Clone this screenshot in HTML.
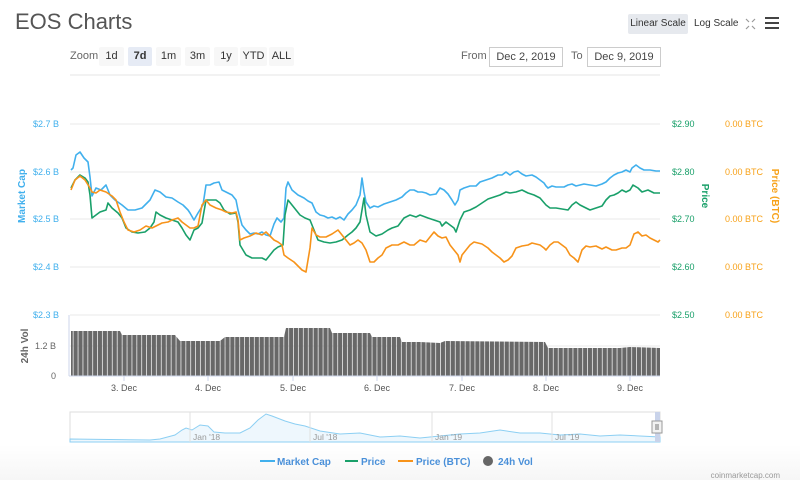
<!DOCTYPE html>
<html><head><meta charset="utf-8"><style>
body{margin:0;width:800px;height:480px;overflow:hidden;background:#fff;font-family:"Liberation Sans",sans-serif;position:relative}
.t{position:absolute;white-space:nowrap}
.btn{position:absolute;top:47px;height:19px;line-height:19px;font-size:11px;color:#333;background:#f7f7f7;text-align:center;border-radius:2px}
.box{position:absolute;top:47px;height:18px;line-height:18px;border:1px solid #ccc;font-size:11px;color:#444;text-align:center}
</style></head><body>
<div style="position:absolute;left:0;top:445px;width:800px;height:35px;background:linear-gradient(#fff,#f6f6f6)"></div>
<div class="t" style="left:15px;top:9px;font-size:22px;color:#555">EOS Charts</div>
<div class="t" style="left:70px;top:50px;font-size:11px;color:#666">Zoom</div>
<div class="btn" style="left:99px;width:25px">1d</div>
<div class="btn" style="left:128px;width:24px;background:#e6ebf5;font-weight:bold">7d</div>
<div class="btn" style="left:156px;width:25px">1m</div>
<div class="btn" style="left:185px;width:25px">3m</div>
<div class="btn" style="left:214px;width:24px">1y</div>
<div class="btn" style="left:240px;width:27px">YTD</div>
<div class="btn" style="left:269px;width:25px">ALL</div>
<div class="t" style="left:461px;top:50px;font-size:11px;color:#666">From</div>
<div class="box" style="left:489px;width:72px">Dec 2, 2019</div>
<div class="t" style="left:571px;top:50px;font-size:11px;color:#666">To</div>
<div class="box" style="left:587px;width:72px">Dec 9, 2019</div>
<div class="t" style="left:628px;top:14px;width:60px;height:20px;line-height:20px;background:#e6e9ee;font-size:10px;color:#333;text-align:center;border-radius:2px">Linear Scale</div>
<div class="t" style="left:694px;top:18px;font-size:10px;color:#333">Log Scale</div>
<svg style="position:absolute;left:0;top:0" width="800" height="480">
<g stroke="#999" stroke-width="1.2" fill="none"><path d="M746 19l3 3M755 19l-3 3M746 29l3-3M755 29l-3-3"/></g>
<g fill="#444"><rect x="765" y="17" width="14" height="2"/><rect x="765" y="22" width="14" height="2"/><rect x="765" y="27" width="14" height="2"/></g>
<line x1="70" y1="75" x2="660" y2="75" stroke="#e6e6e6"/>
<g stroke="#e8e8e8"><line x1="70" y1="124" x2="660" y2="124"/><line x1="70" y1="172" x2="660" y2="172"/><line x1="70" y1="219" x2="660" y2="219"/><line x1="70" y1="267" x2="660" y2="267"/><line x1="70" y1="315" x2="660" y2="315"/><line x1="70" y1="346" x2="660" y2="346"/></g>
<line x1="69" y1="315" x2="69" y2="376" stroke="#ccd6eb"/>
<defs><pattern id="bp" width="4.9" height="10" patternUnits="userSpaceOnUse"><rect x="0" y="0" width="4.2" height="10" fill="#686868"/></pattern></defs>
<polygon fill="url(#bp)" points="71,376 71,331 120,331 122,335 175,335 180,341 220,341 225,337 284,337 286,328 330,328 332,333 370,333 372,337 400,337 402,342 420,342 440,343 445,341 545,342 548,348 620,348 630,347 660,348 660,376"/>
<line x1="69" y1="376" x2="660" y2="376" stroke="#ccd6eb"/>
<g stroke="#ccd6eb"><line x1="124" y1="376" x2="124" y2="381"/><line x1="208" y1="376" x2="208" y2="381"/><line x1="293" y1="376" x2="293" y2="381"/><line x1="377" y1="376" x2="377" y2="381"/><line x1="462" y1="376" x2="462" y2="381"/><line x1="546" y1="376" x2="546" y2="381"/><line x1="630" y1="376" x2="630" y2="381"/></g>
<g fill="none" stroke-width="1.6" stroke-linejoin="round">
<polyline stroke="#41b0ed" points="71,170 73,168 76,155 80,152 84,158 88,162 90,177 92,196 96,188 101,190 106,185 110,195 115,200 122,205 128,210 135,210 142,208 150,200 155,190 160,192 166,197 172,198 178,202 183,205 188,210 190,213 194,220 198,213 203,205 206,185 210,185 214,183 219,182 222,190 226,192 232,195 236,200 238,210 242,225 246,230 250,234 254,233 258,234 262,232 266,235 270,236 274,224 277,218 281,222 284,218 286,188 288,182 292,190 298,195 304,198 308,201 312,203 316,212 320,215 324,216 328,218 332,217 336,219 340,217 344,220 348,214 352,210 356,205 360,195 362,178 364,192 366,202 370,208 374,206 378,207 384,204 390,202 396,200 402,197 406,193 410,190 414,190 418,192 422,192 426,193 430,195 436,194 440,188 444,190 448,194 452,200 455,205 458,200 460,190 464,188 470,186 476,186 480,182 486,180 492,178 498,175 502,175 506,172 510,175 514,172 518,171 522,174 526,176 532,175 536,177 540,180 544,183 546,186 548,188 552,186 556,187 560,187 564,187 568,185 572,184 576,186 580,185 584,184 590,185 596,186 602,184 606,182 610,178 614,175 618,173 622,172 626,170 630,172 632,168 636,165 640,168 644,170 650,170 656,171 660,171"/>
<polyline stroke="#1aa06a" points="71,188 75,180 80,175 85,178 88,182 90,195 92,218 96,215 100,212 106,210 108,203 112,208 118,213 122,218 126,228 132,232 138,233 145,232 150,228 154,222 156,212 160,215 166,218 172,220 178,222 182,228 186,235 190,240 194,230 198,228 202,223 206,200 210,200 216,200 220,203 224,210 230,214 236,213 238,222 240,245 246,255 252,258 258,258 262,258 266,260 270,255 274,250 278,247 283,245 285,215 288,200 292,205 296,210 300,215 305,218 310,220 312,225 318,240 324,242 330,243 336,242 342,240 348,235 352,232 356,228 360,222 364,198 366,215 370,232 376,236 382,234 388,230 392,228 398,226 404,218 410,215 416,217 420,215 428,218 434,220 440,222 442,226 446,222 450,225 454,228 456,232 460,220 464,212 470,210 476,207 482,203 488,199 494,197 500,195 506,192 510,193 516,192 522,190 528,193 534,195 540,198 546,205 550,208 556,208 562,209 568,210 572,205 576,202 580,205 584,207 590,210 596,208 602,206 606,200 610,196 614,195 618,193 622,190 626,192 630,190 633,185 638,188 642,192 648,190 654,193 660,193"/>
<polyline stroke="#f7931a" points="71,190 75,180 80,176 85,180 90,188 92,192 96,193 100,190 106,192 112,196 116,200 120,212 124,222 128,230 134,232 140,230 146,226 152,228 158,225 162,223 168,222 172,220 178,218 182,222 186,225 190,228 194,228 198,226 202,205 206,200 210,205 216,208 222,210 226,212 232,213 236,212 238,220 240,240 244,238 250,236 256,233 262,235 266,232 270,236 274,240 278,242 282,245 284,255 288,258 294,262 298,266 302,270 306,272 310,248 312,228 316,235 320,237 326,237 332,234 338,230 342,235 346,240 350,245 354,243 358,240 362,243 366,250 370,262 374,262 378,258 382,255 386,248 392,245 398,245 404,242 410,245 414,245 420,240 426,242 430,237 434,232 438,236 442,238 446,237 450,245 454,250 458,255 460,262 462,255 466,250 470,245 474,242 478,243 482,244 488,248 492,252 496,255 500,258 504,262 508,260 512,256 516,248 522,246 528,245 532,243 536,244 540,245 544,248 546,250 550,245 554,242 558,242 562,245 566,248 570,255 574,258 578,262 582,250 586,246 590,247 596,246 602,249 606,247 612,250 616,250 622,248 626,248 630,245 634,234 638,232 642,236 646,235 650,238 654,240 658,242 660,240"/>
</g>
<rect x="70" y="412" width="590" height="30" fill="#fff" stroke="#ddd"/>
<path d="M70 439 L150 440 L160 439 L175 435 L182 430 L186 428 L192 430 L200 425 L208 426 L214 432 L225 433 L240 433 L250 428 L258 420 L266 414 L272 416 L285 421 L295 424 L305 426 L320 431 L340 434 L360 433 L380 437 L400 436 L420 438 L440 436 L460 434 L480 433 L500 430 L520 433 L540 433 L560 435 L580 434 L600 436 L620 435 L640 436 L660 437 L660 442 L70 442Z" fill="#eef7fd" stroke="#8ccff3" stroke-width="1"/>
<g stroke="#e0e0e0"><line x1="190" y1="412" x2="190" y2="442"/><line x1="310" y1="412" x2="310" y2="442"/><line x1="432" y1="412" x2="432" y2="442"/><line x1="552" y1="412" x2="552" y2="442"/></g>
<rect x="655" y="412" width="5" height="30" fill="#c9d3ea"/>
<rect x="652" y="421" width="10" height="12" fill="#f2f2f2" stroke="#999"/>
<g stroke="#777"><line x1="656" y1="424" x2="656" y2="430"/><line x1="658" y1="424" x2="658" y2="430"/></g>
<line x1="260" y1="461" x2="275" y2="461" stroke="#41b0ed" stroke-width="2"/>
<line x1="345" y1="461" x2="358" y2="461" stroke="#1aa06a" stroke-width="2"/>
<line x1="398" y1="461" x2="413" y2="461" stroke="#f7931a" stroke-width="2"/>
<circle cx="488" cy="461" r="5" fill="#666"/>
<g font-family="Liberation Sans" font-size="9" fill="#41b0ed">
<text x="59" y="127" text-anchor="end">$2.7 B</text><text x="59" y="175" text-anchor="end">$2.6 B</text><text x="59" y="222" text-anchor="end">$2.5 B</text><text x="59" y="270" text-anchor="end">$2.4 B</text><text x="59" y="318" text-anchor="end">$2.3 B</text>
<text transform="translate(25,196) rotate(-90)" text-anchor="middle" font-size="10" font-weight="bold">Market Cap</text>
</g>
<g font-family="Liberation Sans" font-size="9" fill="#666"><text x="56" y="349" text-anchor="end">1.2 B</text><text x="56" y="379" text-anchor="end">0</text>
<text transform="translate(28,346) rotate(-90)" text-anchor="middle" font-size="10" font-weight="bold">24h Vol</text></g>
<g font-family="Liberation Sans" font-size="9" fill="#1aa06a"><text x="672" y="127">$2.90</text><text x="672" y="175">$2.80</text><text x="672" y="222">$2.70</text><text x="672" y="270">$2.60</text><text x="672" y="318">$2.50</text>
<text transform="translate(702,196) rotate(90)" text-anchor="middle" font-size="10" font-weight="bold">Price</text></g>
<g font-family="Liberation Sans" font-size="9" fill="#f7a21a"><text x="725" y="127">0.00 BTC</text><text x="725" y="175">0.00 BTC</text><text x="725" y="222">0.00 BTC</text><text x="725" y="270">0.00 BTC</text><text x="725" y="318">0.00 BTC</text>
<text transform="translate(772,196) rotate(90)" text-anchor="middle" font-size="10" font-weight="bold">Price (BTC)</text></g>
<g font-family="Liberation Sans" font-size="9" fill="#555" text-anchor="middle"><text x="124" y="391">3. Dec</text><text x="208" y="391">4. Dec</text><text x="293" y="391">5. Dec</text><text x="377" y="391">6. Dec</text><text x="462" y="391">7. Dec</text><text x="546" y="391">8. Dec</text><text x="630" y="391">9. Dec</text></g>
<g font-family="Liberation Sans" font-size="8.5" fill="#999"><text x="193" y="440">Jan '18</text><text x="313" y="440">Jul '18</text><text x="435" y="440">Jan '19</text><text x="555" y="440">Jul '19</text></g>
<g font-family="Liberation Sans" font-size="10" fill="#4a90d9" font-weight="bold"><text x="277" y="465">Market Cap</text><text x="361" y="465">Price</text><text x="416" y="465">Price (BTC)</text><text x="498" y="465">24h Vol</text></g>
<text x="780" y="478" font-family="Liberation Sans" font-size="8" fill="#999" text-anchor="end">coinmarketcap.com</text>
</svg>
</body></html>
